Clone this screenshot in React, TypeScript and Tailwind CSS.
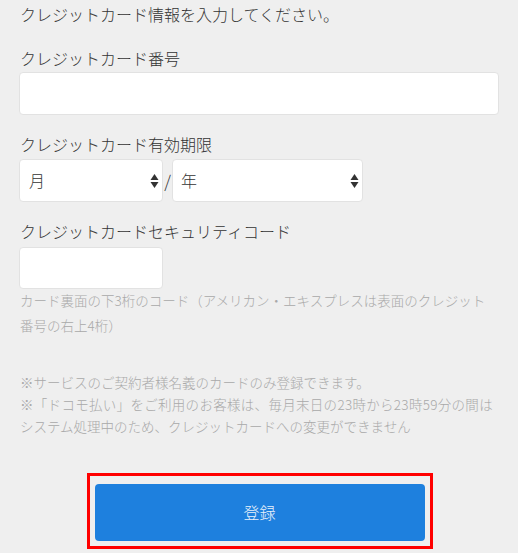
import React from "react";

const Arrows = () => (
  <svg width="9" height="16" viewBox="0 0 9 16" className="absolute right-[3px] top-1/2 -translate-y-1/2">
    <path d="M4.5 1 L8.5 7 L0.5 7 Z" fill="#333" />
    <path d="M4.5 15 L8.5 9 L0.5 9 Z" fill="#333" />
  </svg>
);

export default function App() {
  return (
    <div
      className="min-h-[553px] w-full bg-[#efefef] text-[#333] font-light"
      style={{ fontFamily: '"Noto Sans CJK JP", "Noto Sans", sans-serif' }}
    >
      <div className="px-[19px] pt-[2px]">
        <p className="text-[16px] leading-[24px] pl-[1px]">クレジットカード情報を入力してください。</p>

        <p className="mt-[20px] text-[16px] leading-[24px] pl-[1px]">クレジットカード番号</p>
        <div className="mt-[2px] h-[43px] w-full rounded-[4px] border border-[#e2e2e2] bg-white" />

        <p className="mt-[17px] text-[16px] leading-[24px] pl-[1px]">クレジットカード有効期限</p>
        <div className="mt-[3px] flex items-center">
          <div className="relative flex h-[43px] w-[144px] items-center rounded-[4px] border border-[#e2e2e2] bg-white pl-[9px] text-[16px]">
            <span className="-translate-y-[1px]">月</span>
            <Arrows />
          </div>
          <span className="w-[9px] text-center text-[17px] leading-none">/</span>
          <div className="relative flex h-[43px] w-[191px] items-center rounded-[4px] border border-[#e2e2e2] bg-white pl-[8px] text-[16px]">
            <span className="-translate-y-[1px]">年</span>
            <Arrows />
          </div>
        </div>

        <p className="mt-[17px] text-[16px] leading-[24px] pl-[1px]">クレジットカードセキュリティコード</p>
        <div className="mt-[4px] h-[42px] w-[144px] rounded-[4px] border border-[#e2e2e2] bg-white" />

        <p className="-mt-[1px] text-[13.5px] leading-[25px] text-[#a9a9a9] pl-[1px] whitespace-nowrap">
          カード裏面の下3桁のコード（アメリカン・エキスプレスは表面のクレジット
          <br />
          番号の右上4桁）
        </p>

        <div className="mt-[33px] text-[13.5px] leading-[22px] text-[#a9a9a9] pl-[1px] whitespace-nowrap">
          <p>※サービスのご契約者様名義のカードのみ登録できます。</p>
          <p className="tracking-[0.3px]">※「ドコモ払い」をご利用のお客様は、毎月末日の23時から23時59分の間は</p>
          <p>システム処理中のため、クレジットカードへの変更ができません</p>
        </div>
      </div>

      <div className="mt-[36px] flex justify-center pl-[1px]">
        <div className="w-[346px] border-[3px] border-[#ff0000] px-[5px] pt-[8px] pb-[5px]">
          <button className="flex h-[57px] w-full items-center justify-center rounded-[4px] bg-[#1e80de] pb-[1px] text-[16px] text-[#e8f1fb]">
            登録
          </button>
        </div>
      </div>
    </div>
  );
}
